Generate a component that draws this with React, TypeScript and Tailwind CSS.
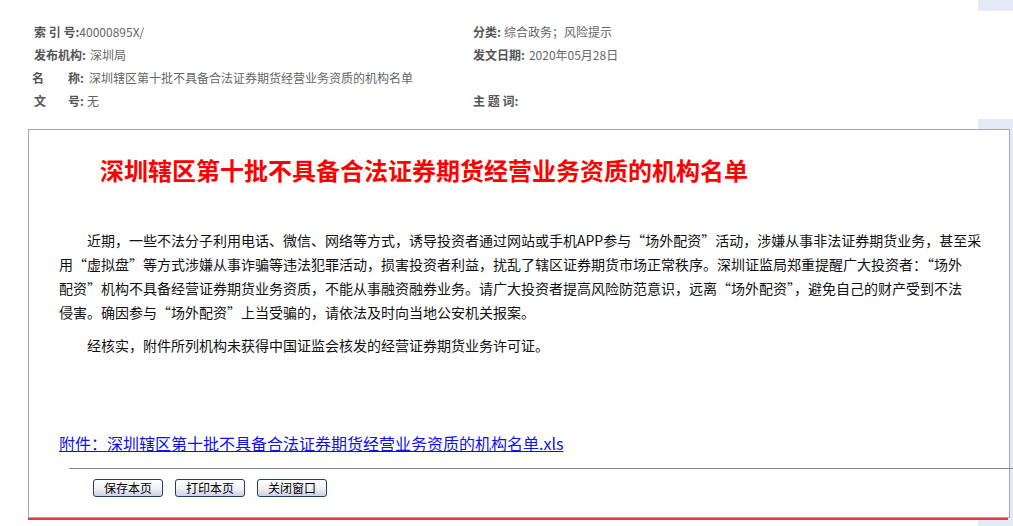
import React from "react";

const font = { fontFamily: '"Noto Sans CJK SC", "Noto Sans", sans-serif' };

function Btn({ children }: { children: React.ReactNode }) {
  return (
    <button className="h-[18px] w-[70px] rounded-[3px] border border-[#1f3d6b] bg-gradient-to-b from-white via-[#f2f2f8] to-[#cfd0e2] text-[12px] leading-[16px] text-black">
      {children}
    </button>
  );
}

export default function App() {
  return (
    <div
      className="flex h-[526px] w-[1013px] overflow-hidden bg-white"
      style={font}
    >
      <div className="flex w-[978px] shrink-0 flex-col">
        {/* header meta */}
        <div className="grid grid-cols-[439px_1fr] pl-[34px] pt-[20px] text-[12px] leading-[23px] text-[#666]">
          <div className="h-[23px] whitespace-nowrap">
            <span className="font-bold text-[#555]">索 引 号:</span>
            <span>40000895X/</span>
          </div>
          <div className="h-[23px] whitespace-nowrap">
            <span className="font-bold text-[#555]">分类:</span>
            <span className="ml-[3px]">综合政务；风险提示</span>
          </div>
          <div className="h-[23px] whitespace-nowrap">
            <span className="font-bold text-[#555]">发布机构:</span>
            <span className="ml-[4px]">深圳局</span>
          </div>
          <div className="h-[23px] whitespace-nowrap">
            <span className="font-bold text-[#555]">发文日期:</span>
            <span className="ml-[4px]">2020年05月28日</span>
          </div>
          <div className="flex h-[23px] whitespace-nowrap">
            <span className="-ml-[2px] flex w-[52px] justify-between font-bold text-[#555]">
              <span>名</span>
              <span>称:</span>
            </span>
            <span className="ml-[5px]">深圳辖区第十批不具备合法证券期货经营业务资质的机构名单</span>
          </div>
          <div className="h-[23px]" />
          <div className="flex h-[23px] whitespace-nowrap">
            <span className="flex w-[50px] justify-between font-bold text-[#555]">
              <span>文</span>
              <span>号:</span>
            </span>
            <span className="ml-[3px]">无</span>
          </div>
          <div className="h-[23px] whitespace-nowrap">
            <span className="font-bold text-[#555]">主 题 词:</span>
          </div>
        </div>

        {/* main box */}
        <div className="relative z-10 ml-[28px] mr-[-32px] mt-[17px] flex flex-col">
          <div className="flex h-[389px] flex-col border border-[#a8a8a8] bg-white">
            <h1 className="ml-[71px] mt-[24px] h-[32px] whitespace-nowrap text-[24px] font-bold leading-[32px] text-[#ff0000]">
              深圳辖区第十批不具备合法证券期货经营业务资质的机构名单
            </h1>
            <div className="ml-[30px] mt-[42px] text-[14px] leading-[24px] text-[#111]">
              <div className="whitespace-nowrap pl-[28px]">
                近期，一些不法分子利用电话、微信、网络等方式，诱导投资者通过网站或手机APP参与“场外配资”活动，涉嫌从事非法证券期货业务，甚至采
              </div>
              <div className="whitespace-nowrap">
                用“虚拟盘”等方式涉嫌从事诈骗等违法犯罪活动，损害投资者利益，扰乱了辖区证券期货市场正常秩序。深圳证监局郑重提醒广大投资者：“场外
              </div>
              <div className="whitespace-nowrap">
                配资”机构不具备经营证券期货业务资质，不能从事融资融券业务。请广大投资者提高风险防范意识，远离“场外配资”，避免自己的财产受到不法
              </div>
              <div className="whitespace-nowrap">
                侵害。确因参与“场外配资”上当受骗的，请依法及时向当地公安机关报案。
              </div>
              <div className="mt-[9px] whitespace-nowrap pl-[28px]">
                经核实，附件所列机构未获得中国证监会核发的经营证券期货业务许可证。
              </div>
            </div>
            <div className="ml-[30px] mt-[76px] h-[20px] text-[16px] leading-[20px]">
              <a href="#" className="whitespace-nowrap text-[#1010ee] underline">
                附件：深圳辖区第十批不具备合法证券期货经营业务资质的机构名单.xls
              </a>
            </div>
            <div className="ml-[40px] mr-[-4px] mt-[15px] h-px bg-[#888]" />
            <div className="ml-[64px] mt-[10px] flex gap-[12px]">
              <Btn>保存本页</Btn>
              <Btn>打印本页</Btn>
              <Btn>关闭窗口</Btn>
            </div>
          </div>
          <div className="mr-[2px] h-[2px] bg-[#e83a3a]" />
        </div>
      </div>

      {/* right strip */}
      <div className="flex w-[35px] shrink-0 flex-col">
        <div className="h-[11px] bg-[#e4ebf7]" />
        <div className="h-[108px] bg-white" />
        <div className="flex-1 bg-[#e4ebf7]" />
      </div>
    </div>
  );
}
